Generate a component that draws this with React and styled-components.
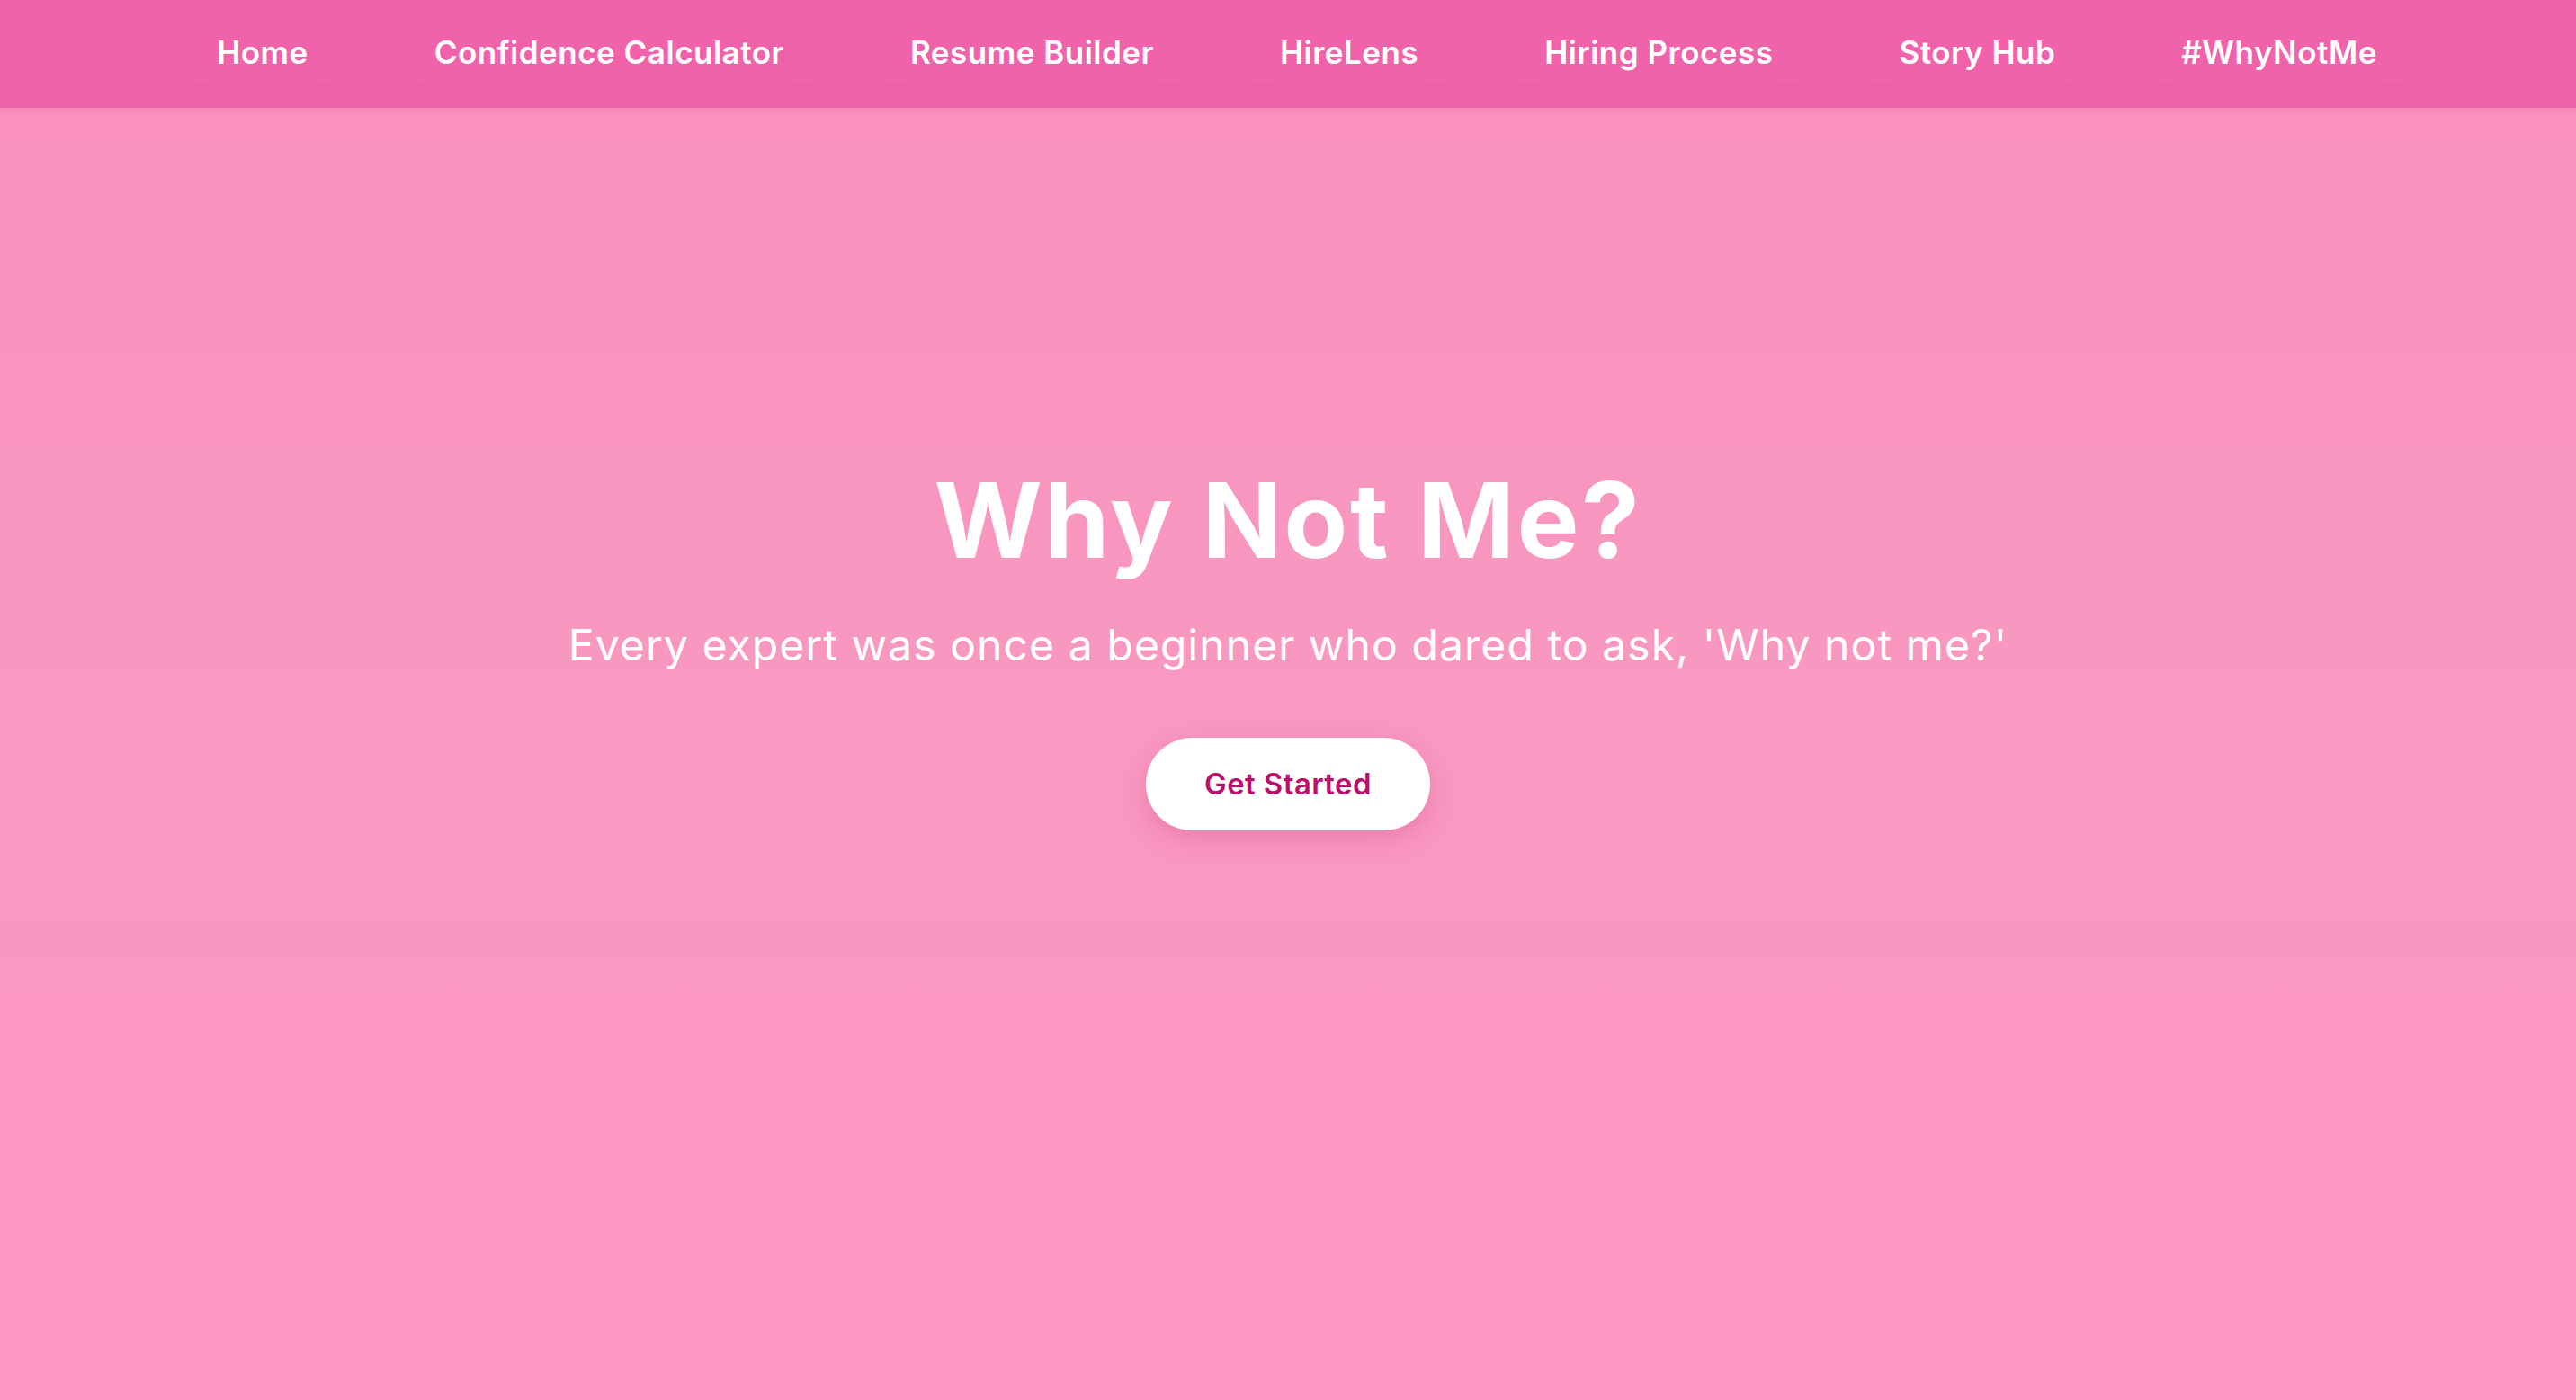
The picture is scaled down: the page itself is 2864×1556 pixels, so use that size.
import styled, { createGlobalStyle } from "styled-components";

const GlobalStyle = createGlobalStyle`
  * { box-sizing: border-box; }
  body {
    margin: 0;
    font-family: "Inter", "Open Sans", sans-serif;
    background: #fa93c0;
  }
`;

const links = [
  "Home",
  "Confidence Calculator",
  "Resume Builder",
  "HireLens",
  "Hiring Process",
  "Story Hub",
  "#WhyNotMe",
];

const App = () => {
  return (
    <Page>
      <GlobalStyle />
      <NavBar>
        <NavList>
          {links.map((label) => (
            <NavItem key={label}>{label}</NavItem>
          ))}
        </NavList>
      </NavBar>
      <Hero>
        <Title>Why Not Me?</Title>
        <Subtitle>
          Every expert was once a beginner who dared to ask, 'Why not me?'
        </Subtitle>
        <CtaButton>Get Started</CtaButton>
      </Hero>
    </Page>
  );
};

export default App;

const Page = styled.div`
min-height: 100vh;
display: flex;
flex-direction: column;
background: linear-gradient(180deg, #fa8fbe 0%, #f898c0 45%, #fd96c3 100%);
`;

const NavBar = styled.nav`
height: 120px;
background: #f063aa;
display: flex;
align-items: center;
justify-content: center;
padding-left: 20px;
box-shadow: 0 2px 8px rgba(190, 40, 110, 0.1);
`;

const NavList = styled.div`
display: flex;
align-items: center;
gap: 38px;
`;

const NavItem = styled.a`
display: block;
padding: 14px 51px 18px;
border-radius: 34px;
color: #ffffff;
font-size: 35px;
font-weight: 600;
letter-spacing: 0.5px;
line-height: 36px;
white-space: nowrap;
cursor: pointer;
box-shadow: 0 4px 14px rgba(200, 50, 120, 0.07);
`;

const Hero = styled.section`
flex: 1;
display: flex;
flex-direction: column;
align-items: center;
padding-top: 391px;
color: #ffffff;
text-align: center;
`;

const Title = styled.h1`
margin: 0;
font-size: 116px;
font-weight: 700;
letter-spacing: 2.5px;
line-height: 134px;
`;

const Subtitle = styled.p`
margin: 38px 0 0;
font-size: 48px;
font-weight: 400;
letter-spacing: 1.1px;
line-height: 67px;
`;

const CtaButton = styled.button`
margin-top: 70px;
padding: 31px 65px;
border: none;
border-radius: 52px;
background: #ffffff;
color: #b8106b;
font-family: inherit;
font-size: 33px;
font-weight: 600;
letter-spacing: 0.4px;
line-height: 41px;
cursor: pointer;
box-shadow: 0 10px 26px rgba(180, 40, 110, 0.22);
`;
